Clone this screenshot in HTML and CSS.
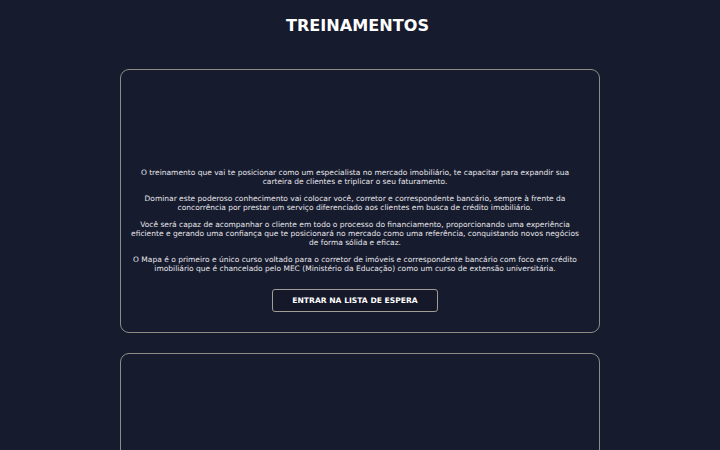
FILE: index.html
```html
<!DOCTYPE html>
<html lang="pt-BR">
<head>
<meta charset="utf-8">
<title>Treinamentos</title>
<link rel="stylesheet" href="styles.css">
</head>
<body>
<main class="page">
  <h1 class="title">TREINAMENTOS</h1>
  <section class="card">
    <div class="media"></div>
    <div class="text">
      <p>O treinamento que vai te posicionar como um especialista no mercado imobiliário, te capacitar para expandir sua carteira de clientes e triplicar o seu faturamento.</p>
      <p>Dominar este poderoso conhecimento vai colocar você, corretor e correspondente bancário, sempre à frente da concorrência por prestar um serviço diferenciado aos clientes em busca de crédito imobiliário.</p>
      <p>Você será capaz de acompanhar o cliente em todo o processo do financiamento, proporcionando uma experiência eficiente e gerando uma confiança que te posicionará no mercado como uma referência, conquistando novos negócios de forma sólida e eficaz.</p>
      <p>O Mapa é o primeiro e único curso voltado para o corretor de imóveis e correspondente bancário com foco em crédito imobiliário que é chancelado pelo MEC (Ministério da Educação) como um curso de extensão universitária.</p>
    </div>
    <button class="cta">ENTRAR NA LISTA DE ESPERA</button>
  </section>
  <section class="card card-second">
    <div class="media"></div>
  </section>
</main>
</body>
</html>
```

FILE: styles.css
```css
html, body {
  margin: 0;
  padding: 0;
  background: #171b2e;
}
body {
  font-family: "DejaVu Sans", sans-serif;
  color: #e6e6ea;
}
.page {
  display: flex;
  flex-direction: column;
  align-items: center;
  padding-top: 15px;
}
.title {
  margin: 0;
  padding-right: 5px;
  font-size: 16.1px;
  line-height: 22px;
  font-weight: bold;
  color: #ffffff;
}
.card {
  box-sizing: border-box;
  width: 480px;
  margin-top: 32px;
  border: 1px solid #8f8c86;
  border-radius: 9px;
  padding: 10px 20px 20px 10px;
  display: flex;
  flex-direction: column;
  align-items: center;
}
.card-second {
  margin-top: 20px;
  height: 200px;
}
.media {
  height: 88px;
  width: 100%;
}
.text {
  width: 100%;
  text-align: center;
  font-size: 7.5px;
  line-height: 9px;
}
.text p {
  margin: 0 0 8px;
}
.cta {
  margin-top: 8px;
  width: 166px;
  height: 23px;
  background: #151829;
  border: 1px solid #a09c96;
  border-radius: 3px;
  color: #ffffff;
  font-family: "DejaVu Sans", sans-serif;
  font-weight: bold;
  font-size: 7.6px;
  padding: 0;
}
```
